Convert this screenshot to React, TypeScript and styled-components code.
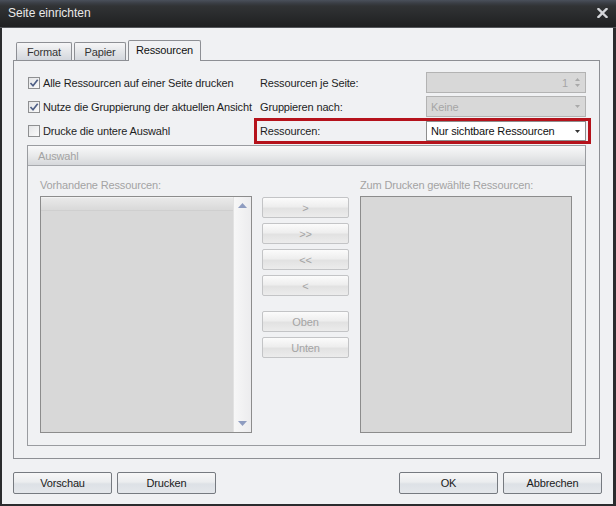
import React from "react";
import styled, { createGlobalStyle, css } from "styled-components";

const GlobalStyle = createGlobalStyle`
  html, body { margin: 0; padding: 0; }
  body {
    font-family: "Liberation Sans", Arial, sans-serif;
    font-size: 11px;
    letter-spacing: -0.15px;
    color: #1e1e1e;
  }
  * { box-sizing: border-box; }
`;

const Window = styled.div`
  width: 616px;
  height: 506px;
  display: flex;
  flex-direction: column;
  background: #2b2c2e;
  overflow: hidden;
`;

const TitleBar = styled.div`
  height: 28px;
  flex: none;
  display: flex;
  align-items: center;
  justify-content: space-between;
  padding: 0 8px 1px 8px;
  background: linear-gradient(#4a505b 0, #3b3f46 3px, #313335 6px, #1f2021 100%);
  border-bottom: 1px solid #55575b;
  color: #e9e9e9;
  font-size: 12px;
  letter-spacing: 0;
`;

const Body = styled.div`
  flex: 1;
  background: #f0f1f3;
  margin: 0 3px 2px 2px;
  padding: 12px 11px 0 11px;
  display: flex;
  flex-direction: column;
`;

const TabStrip = styled.div`
  height: 20px;
  display: flex;
  align-items: flex-end;
  padding-left: 3px;
  gap: 2px;
`;

const Tab = styled.div<{ $active?: boolean; $w: number }>`
  width: ${(p) => p.$w}px;
  height: 18px;
  display: flex;
  align-items: center;
  justify-content: center;
  border: 1px solid #8d8f94;
  border-bottom: none;
  border-radius: 2px 2px 0 0;
  background: linear-gradient(#f6f6f7, #e4e6e9 50%, #d3d7dd);
  color: #333;
  ${(p) =>
    p.$active &&
    css`
      height: 21px;
      margin-bottom: -1px;
      position: relative;
      z-index: 1;
      background: #f0f1f3;
      color: #111;
      padding-bottom: 2px;
    `}
`;

const Panel = styled.div`
  width: 587px;
  height: 399px;
  border: 1px solid #8d8f94;
  padding: 11px 13px 0 13px;
  display: flex;
  flex-direction: column;
`;

const Options = styled.div`
  display: grid;
  grid-template-columns: 233px 166px 160px;
  grid-template-rows: 21px 21px 21px;
  row-gap: 3px;
  align-items: center;
`;

const CheckRow = styled.label`
  display: flex;
  align-items: center;
  gap: 3px;
  padding-left: 1px;
  white-space: nowrap;
`;

const Box = styled.span`
  width: 12px;
  height: 12px;
  flex: none;
  border: 1px solid #8e8f91;
  background: linear-gradient(135deg, #e4e5e7, #fafafa);
  display: flex;
  align-items: center;
  justify-content: center;
`;

const FieldLabel = styled.div`
  white-space: nowrap;
`;

const Field = styled.div<{ $disabled?: boolean }>`
  height: 21px;
  display: flex;
  align-items: center;
  padding: 0 5px 0 4px;
  border: 1px solid ${(p) => (p.$disabled ? "#b3b3b3" : "#8e8e8e")};
  background: ${(p) => (p.$disabled ? "#d8d8d8" : "#ffffff")};
  color: ${(p) => (p.$disabled ? "#a6a6a6" : "#111")};
`;

const FieldText = styled.span<{ $right?: boolean }>`
  flex: 1;
  text-align: ${(p) => (p.$right ? "right" : "left")};
  padding-right: ${(p) => (p.$right ? "7px" : "0")};
`;

const Spin = styled.span`
  display: flex;
  flex-direction: column;
  gap: 3px;
`;

const Highlight = styled.div`
  grid-column: 2 / 4;
  align-self: end;
  height: 20px;
  margin: 0 -2px 0 -3px;
  padding: 0 2px 0 3px;
  display: grid;
  grid-template-columns: 166px 160px;
  align-items: center;
  box-shadow: 0 0 0 3px #b5121b;
  & > ${Field} {
    height: 20px;
  }
`;

const Group = styled.div`
  margin-top: 4px;
  width: 559px;
  height: 301px;
  border: 1px solid #9a9ca0;
  display: flex;
  flex-direction: column;
`;

const GroupHeader = styled.div`
  height: 20px;
  flex: none;
  padding-left: 10px;
  display: flex;
  align-items: center;
  color: #a2a2a2;
  border-bottom: 1px solid #a7a9ad;
  background: linear-gradient(#f8f8f9, #e9eaeb 50%, #d6d8db);
`;

const GroupBody = styled.div`
  display: grid;
  grid-template-columns: 212px 1fr 212px;
  grid-template-rows: 14px 237px;
  row-gap: 4px;
  padding: 12px 13px 0 12px;
`;

const ListLabel = styled.div<{ $col: number }>`
  grid-column: ${(p) => p.$col};
  color: #a3a3a3;
  line-height: 14px;
  white-space: nowrap;
`;

const ListBox = styled.div<{ $col: number }>`
  grid-column: ${(p) => p.$col};
  grid-row: 2;
  border: 1px solid #8c8c8c;
  background: #d8d8d8;
  display: flex;
`;

const ListContent = styled.div`
  flex: 1;
  display: flex;
  flex-direction: column;
`;

const ListHeaderStrip = styled.div`
  height: 14px;
  border-top: 1px solid #f2f2f2;
  border-bottom: 1px solid #cfcfcf;
  background: linear-gradient(#e9e9e9, #e1e1e1 50%, #d9d9d9);
`;

const ScrollBar = styled.div`
  width: 18px;
  flex: none;
  border-left: 1px solid #e2e2e2;
  background: linear-gradient(90deg, #f7f7f7, #ececee);
  display: flex;
  flex-direction: column;
  justify-content: space-between;
  align-items: center;
  padding: 6px 0 6px 0;
`;

const ButtonColumn = styled.div`
  grid-column: 2;
  grid-row: 2;
  display: flex;
  flex-direction: column;
  gap: 5px;
  padding: 1px 0 0 10px;
`;

const MoveButton = styled.div<{ $spaced?: boolean }>`
  width: 87px;
  height: 21px;
  border: 1px solid #c3c4c6;
  border-radius: 2px;
  background: linear-gradient(#fbfbfb, #eeeeee 45%, #e2e2e2 55%, #ececec);
  color: #a4a4a4;
  display: flex;
  align-items: center;
  justify-content: center;
  ${(p) => p.$spaced && "margin-top: 10px;"}
`;

const Footer = styled.div`
  margin-top: 13px;
  display: flex;
  justify-content: space-between;
`;

const FooterGroup = styled.div`
  display: flex;
  gap: 5px;
`;

const DialogButton = styled.div`
  width: 99px;
  height: 22px;
  border: 1px solid #767a80;
  border-radius: 2px;
  background: linear-gradient(#f7f7f7, #ebedef 45%, #dde1e6 55%, #e4e7eb);
  color: #1a1a1a;
  display: flex;
  align-items: center;
  justify-content: center;
`;

const Arrow = ({ up, color, w = 5, h = 3 }: { up?: boolean; color: string; w?: number; h?: number }) => (
  <svg width={w} height={h} viewBox={`0 0 ${w} ${h}`}>
    <path d={up ? `M0 ${h} L${w / 2} 0 L${w} ${h} Z` : `M0 0 L${w} 0 L${w / 2} ${h} Z`} fill={color} />
  </svg>
);

const Check = () => (
  <svg width="10" height="10" viewBox="0 0 10 10">
    <path d="M1.5 5 L4 7.8 L8.7 1.8" fill="none" stroke="#4e5f86" strokeWidth="1.7" />
  </svg>
);

const CloseIcon = () => (
  <svg width="11" height="10" viewBox="0 0 11 10">
    <path d="M1.5 1 L9.5 9 M9.5 1 L1.5 9" stroke="#d4d6da" strokeWidth="2.4" strokeLinecap="square" />
  </svg>
);

export default function App() {
  return (
    <>
      <GlobalStyle />
      <Window>
        <TitleBar>
          <span>Seite einrichten</span>
          <CloseIcon />
        </TitleBar>
        <Body>
          <TabStrip>
            <Tab $w={56}>Format</Tab>
            <Tab $w={52}>Papier</Tab>
            <Tab $w={73} $active>
              Ressourcen
            </Tab>
          </TabStrip>
          <Panel>
            <Options>
              <CheckRow>
                <Box>
                  <Check />
                </Box>
                Alle Ressourcen auf einer Seite drucken
              </CheckRow>
              <FieldLabel>Ressourcen je Seite:</FieldLabel>
              <Field $disabled>
                <FieldText $right>1</FieldText>
                <Spin>
                  <Arrow up color="#a9a9a9" />
                  <Arrow color="#a9a9a9" />
                </Spin>
              </Field>

              <CheckRow>
                <Box>
                  <Check />
                </Box>
                Nutze die Gruppierung der aktuellen Ansicht
              </CheckRow>
              <FieldLabel>Gruppieren nach:</FieldLabel>
              <Field $disabled>
                <FieldText>Keine</FieldText>
                <Arrow color="#a9a9a9" />
              </Field>

              <CheckRow>
                <Box />
                Drucke die untere Auswahl
              </CheckRow>
              <Highlight>
                <FieldLabel>Ressourcen:</FieldLabel>
                <Field>
                  <FieldText>Nur sichtbare Ressourcen</FieldText>
                  <Arrow color="#333" />
                </Field>
              </Highlight>
            </Options>

            <Group>
              <GroupHeader>Auswahl</GroupHeader>
              <GroupBody>
                <ListLabel $col={1}>Vorhandene Ressourcen:</ListLabel>
                <ListLabel $col={3}>Zum Drucken gewählte Ressourcen:</ListLabel>
                <ListBox $col={1}>
                  <ListContent>
                    <ListHeaderStrip />
                  </ListContent>
                  <ScrollBar>
                    <Arrow up color="#8e9cc0" w={9} h={5} />
                    <Arrow color="#8e9cc0" w={9} h={5} />
                  </ScrollBar>
                </ListBox>
                <ButtonColumn>
                  <MoveButton>&gt;</MoveButton>
                  <MoveButton>&gt;&gt;</MoveButton>
                  <MoveButton>&lt;&lt;</MoveButton>
                  <MoveButton>&lt;</MoveButton>
                  <MoveButton $spaced>Oben</MoveButton>
                  <MoveButton>Unten</MoveButton>
                </ButtonColumn>
                <ListBox $col={3} />
              </GroupBody>
            </Group>
          </Panel>
          <Footer>
            <FooterGroup>
              <DialogButton>Vorschau</DialogButton>
              <DialogButton>Drucken</DialogButton>
            </FooterGroup>
            <FooterGroup>
              <DialogButton>OK</DialogButton>
              <DialogButton>Abbrechen</DialogButton>
            </FooterGroup>
          </Footer>
        </Body>
      </Window>
    </>
  );
}
